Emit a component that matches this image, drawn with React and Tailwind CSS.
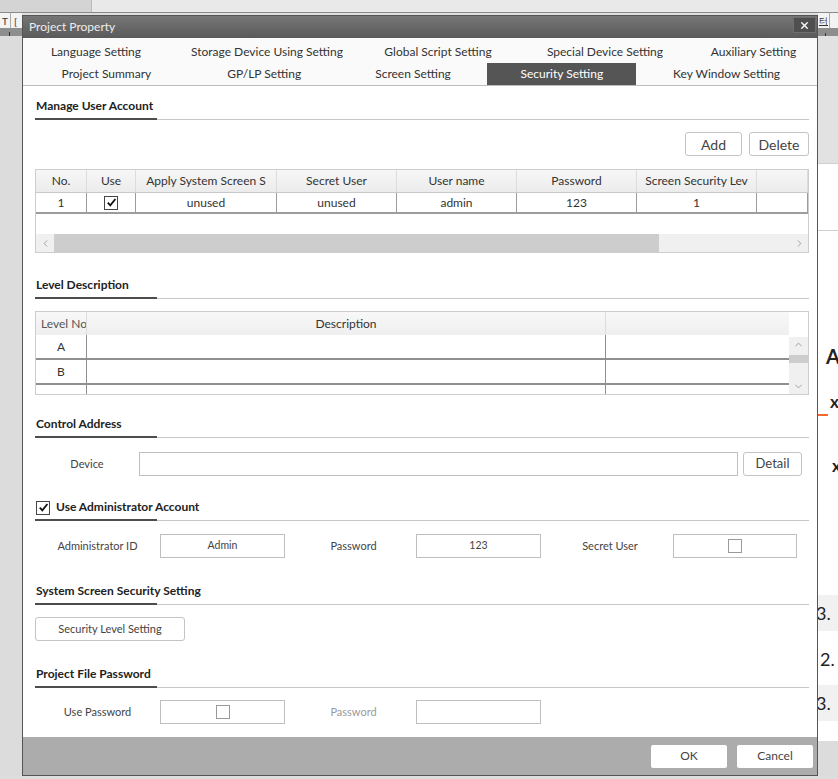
import React from "react";
import { X, ChevronLeft, ChevronRight, ChevronUp, ChevronDown } from "lucide-react";

const Check = ({ checked }) => (
  <span
    className={
      checked
        ? "inline-flex items-center justify-center w-[14px] h-[14px] border border-[#444] bg-white"
        : "inline-flex items-center justify-center w-[14px] h-[14px] border border-[#9a9a9a] bg-white"
    }
  >
    {checked && (
      <svg width="11" height="11" viewBox="0 0 11 11">
        <path d="M1.8 5.6 L4.3 8.4 L9.4 2" stroke="#111" strokeWidth="1.8" fill="none" />
      </svg>
    )}
  </span>
);

// section title with the dark underline on the left part
const Section = ({ title, checked, className }) => (
  <div className={`flex items-end h-[22px] ${className || ""}`}>
    <div className="w-[122px] h-full border-b-2 border-[#4d4d4d] flex items-start gap-[6px] pl-[1px] whitespace-nowrap">
      {checked !== undefined && (
        <span className="mt-[1px]">
          <Check checked={checked} />
        </span>
      )}
      <span className="text-[12px] leading-[16px] font-bold text-[#222]">{title}</span>
    </div>
    <div className="flex-1 border-b border-[#c6c6c6]" />
  </div>
);

const Box = ({ children, className }) => (
  <div
    className={`h-[24px] border border-[#bfbfbf] bg-white flex items-center justify-center text-[10.5px] text-[#444] ${className || ""}`}
  >
    {children}
  </div>
);

const tabsTop = [
  ["Language Setting", "w-[146px]"],
  ["Storage Device Using Setting", "w-[196px]"],
  ["Global Script Setting", "w-[146px]"],
  ["Special Device Setting", "w-[188px]"],
  ["Auxiliary Setting", "w-[109px]"],
];

const tabsBottom = [
  ["Project Summary", "w-[167px]"],
  ["GP/LP Setting", "w-[149px]"],
  ["Screen Setting", "w-[149px]"],
  ["Security Setting", "w-[149px]"],
  ["Key Window Setting", "w-[181px]"],
];

const userCols = [
  ["No.", "w-[51px]", "1"],
  ["Use", "w-[49px]", "check"],
  ["Apply System Screen S", "w-[141px]", "unused"],
  ["Secret User", "w-[120px]", "unused"],
  ["User name", "w-[120px]", "admin"],
  ["Password", "w-[120px]", "123"],
  ["Screen Security Lev", "w-[120px]", "1"],
  ["", "flex-1", ""],
];

export default function App() {
  return (
    <div className="relative w-[838px] h-[779px] overflow-hidden bg-[#dedede] font-['Lato','Noto_Sans',sans-serif] text-[#333]">
      {/* ── background application ── */}
      <div className="flex h-[13px] border-b border-[#8a8a8a]">
        <div className="w-[92px] bg-[#d4d4d4] border-r border-[#bcbcbc]" />
        <div className="flex-1 bg-[#e9e9e9]" />
      </div>
      <div className="flex h-[765px]">
        <div className="w-[22px] flex flex-col">
          <div className="h-[15px] bg-[#f3f3f3] flex items-center text-[10px] leading-none text-[#333]">
            <span className="w-[11px] h-full border-r border-[#aaa] flex items-center justify-center">T</span>
            <span className="pl-[3px]">[</span>
          </div>
          <div className="h-[8px] bg-[#8e8e8e] flex items-end">
            <span className="w-[10px] h-[4px] border-r border-[#333]" />
          </div>
          <div className="flex-1 bg-[#dcdcdc]" />
        </div>
        <div className="flex-1" />
        <div className="w-[20px] flex flex-col">
          <div className="h-[15px] bg-[#f3f3f3] flex items-center text-[9px] leading-none text-[#333]">
            <span className="w-[12px] h-full border-r border-[#aaa] flex items-center justify-center underline">터</span>
          </div>
          <div className="h-[8px] bg-[#8e8e8e] flex items-end">
            <span className="w-[8px] h-[3px] border-r border-[#333]" />
          </div>
          <div className="h-[127px] bg-[#e2e2e2]" />
          <div className="h-[67px] bg-white border-t border-[#cfcfcf]" />
          <div className="h-[365px] bg-white border-t border-[#cfcfcf] flex flex-col pl-[8px]">
            <span className="mt-[113px] text-[20px] leading-[24px] font-bold text-[#222]">A</span>
            <span className="mt-[24px] pl-[4px] text-[17px] leading-[20px] font-bold text-[#222]">x</span>
            <span className="mt-[2px] -ml-[8px] w-[10px] h-[2px] bg-[#f26a2e]" />
            <span className="mt-[40px] pl-[6px] text-[17px] leading-[20px] font-bold text-[#222]">x</span>
          </div>
          <div className="h-[36px] bg-[#f1f1f1] flex items-center text-[18px] text-[#222] -ml-[2px]">3.</div>
          <div className="h-[10px] bg-white" />
          <div className="h-[36px] bg-white flex items-center text-[18px] text-[#222] pl-[2px]">2.</div>
          <div className="h-[8px] bg-white" />
          <div className="h-[36px] bg-[#f1f1f1] flex items-center text-[18px] text-[#222] -ml-[2px]">3.</div>
          <div className="h-[20px] bg-white" />
          <div className="flex-1 bg-[#dcdcdc]" />
        </div>
      </div>

      {/* ── Project Property dialog ── */}
      <div className="absolute left-[22px] top-[15px] w-[796px] h-[761px] border border-[#555] bg-white flex flex-col">
        {/* title bar */}
        <div className="h-[22px] bg-gradient-to-b from-[#767676] to-[#5a5a5a] flex items-start justify-between">
          <span className="pl-[6px] text-[12px] leading-[22px] text-[#eeeeee]">Project Property</span>
          <button className="mt-[1px] mr-[1px] w-[23px] h-[16px] bg-[#4f4f4f] border border-[#6e6e6e] flex items-center justify-center">
            <X size={11} strokeWidth={3.2} color="#f2f2f2" />
          </button>
        </div>

        {/* tabs */}
        <div className="h-[48px] bg-[#fafafa] pt-[3px] border-b border-[#bdbdbd] text-[12px] text-[#333]">
          <div className="flex h-[22px]">
            {tabsTop.map(([t, w]) => (
              <div key={t} className={`${w} flex items-center justify-center whitespace-nowrap`}>
                {t}
              </div>
            ))}
          </div>
          <div className="flex h-[22px]">
            {tabsBottom.map(([t, w]) => (
              <div
                key={t}
                className={
                  t === "Security Setting"
                    ? `${w} flex items-center justify-center whitespace-nowrap bg-[#555] text-white`
                    : `${w} flex items-center justify-center whitespace-nowrap`
                }
              >
                {t}
              </div>
            ))}
          </div>
        </div>

        {/* content */}
        <div className="flex-1 flex flex-col pl-[12px] pr-[8px] text-[12px]">
          <Section title="Manage User Account" className="mt-[12px]" />

          <div className="flex justify-end gap-[7px] mt-[12px]">
            <button className="w-[57px] h-[24px] border border-[#c4c4c4] rounded-[3px] bg-white text-[14px] text-[#444]">Add</button>
            <button className="w-[60px] h-[24px] border border-[#c4c4c4] rounded-[3px] bg-white text-[14px] text-[#444]">Delete</button>
          </div>

          {/* user table */}
          <div className="mt-[13px] h-[84px] border border-[#cdcdcd] flex flex-col">
            <div className="flex h-[23px] bg-gradient-to-b from-[#f7f7f7] to-[#ececec] border-b border-[#c9c9c9]">
              {userCols.map(([h, w], i) => (
                <div key={i} className={`${w} border-r border-[#dcdcdc] flex items-center justify-center whitespace-nowrap overflow-hidden`}>
                  {h}
                </div>
              ))}
            </div>
            <div className="flex h-[21px] border-b-2 border-[#9c9c9c]">
              {userCols.map(([h, w, v], i) => (
                <div key={i} className={`${w} border-r border-[#9c9c9c] flex items-center justify-center`}>
                  {v === "check" ? <Check checked /> : v}
                </div>
              ))}
            </div>
            <div className="flex-1" />
            <div className="h-[18px] bg-[#f0f0f0] flex items-center">
              <div className="w-[18px] flex justify-center">
                <ChevronLeft size={11} color="#999" />
              </div>
              <div className="w-[605px] h-full bg-[#cdcdcd]" />
              <div className="flex-1" />
              <div className="w-[18px] flex justify-center">
                <ChevronRight size={11} color="#999" />
              </div>
            </div>
          </div>

          <Section title="Level Description" className="mt-[24px]" />

          {/* level table */}
          <div className="mt-[12px] h-[84px] border border-[#cdcdcd] flex">
            <div className="flex-1 flex flex-col">
              <div className="flex h-[25px] bg-gradient-to-b from-[#f8f8f8] to-[#efefef]">
                <div className="w-[51px] border-r border-[#dcdcdc] flex items-center pl-[5px] whitespace-nowrap overflow-hidden text-[#555]">
                  Level No.
                </div>
                <div className="w-[519px] border-r border-[#dcdcdc] flex items-center justify-center">Description</div>
                <div className="flex-1" />
              </div>
              {["A", "B", ""].map((l, i) => (
                <div
                  key={i}
                  className={
                    i < 2
                      ? "flex h-[25px] border-b-2 border-[#8f8f8f] shrink-0"
                      : "flex h-[9px] shrink-0"
                  }
                >
                  <div className="w-[51px] border-r border-[#8f8f8f] flex items-center justify-center">{l}</div>
                  <div className="w-[519px] border-r border-[#8f8f8f]" />
                  <div className="flex-1" />
                </div>
              ))}
            </div>
            <div className="w-[19px] flex flex-col">
              <div className="h-[25px] bg-white" />
              <div className="flex-1 bg-[#f0f0f0] flex flex-col items-center">
                <ChevronUp size={11} color="#999" className="mt-[2px]" />
                <div className="w-full h-[8px] bg-[#cdcdcd] mt-[5px]" />
                <div className="flex-1" />
                <ChevronDown size={11} color="#999" className="mb-[2px]" />
              </div>
            </div>
          </div>

          <Section title="Control Address" className="mt-[21px]" />

          <div className="flex items-center mt-[14px] h-[24px] text-[11px]">
            <div className="w-[104px] text-center text-[#444]">Device</div>
            <Box className="w-[599px]" />
            <button className="ml-[5px] w-[59px] h-[24px] border border-[#c4c4c4] rounded-[3px] bg-white text-[13px] text-[#444]">
              Detail
            </button>
          </div>

          <Section title="Use Administrator Account" checked className="mt-[23px]" />

          <div className="flex items-center mt-[13px] h-[24px] text-[11px] text-[#444]">
            <div className="w-[125px] text-center">Administrator ID</div>
            <Box className="w-[125px]">Admin</Box>
            <div className="w-[131px] text-center pl-[6px]">Password</div>
            <Box className="w-[125px]">123</Box>
            <div className="w-[132px] text-center pl-[6px]">Secret User</div>
            <Box className="w-[124px]">
              <Check />
            </Box>
          </div>

          <Section title="System Screen Security Setting" className="mt-[25px]" />

          <button className="mt-[12px] w-[150px] h-[24px] border border-[#c4c4c4] rounded-[3px] bg-white text-[11px] text-[#444]">
            Security Level Setting
          </button>

          <Section title="Project File Password" className="mt-[25px]" />

          <div className="flex items-center mt-[12px] h-[24px] text-[11px] text-[#444]">
            <div className="w-[125px] text-center">Use Password</div>
            <Box className="w-[125px]">
              <Check />
            </Box>
            <div className="w-[131px] text-center text-[#9a9a9a] pl-[6px]">Password</div>
            <Box className="w-[125px]" />
          </div>
        </div>

        {/* footer */}
        <div className="h-[38px] bg-[#acacac] flex items-center justify-end gap-[10px] pr-[4px]">
          <button className="w-[76px] h-[23px] bg-white rounded-[2px] text-[12px] text-[#444]">OK</button>
          <button className="w-[76px] h-[23px] bg-white rounded-[2px] text-[12px] text-[#444]">Cancel</button>
        </div>
      </div>
    </div>
  );
}
